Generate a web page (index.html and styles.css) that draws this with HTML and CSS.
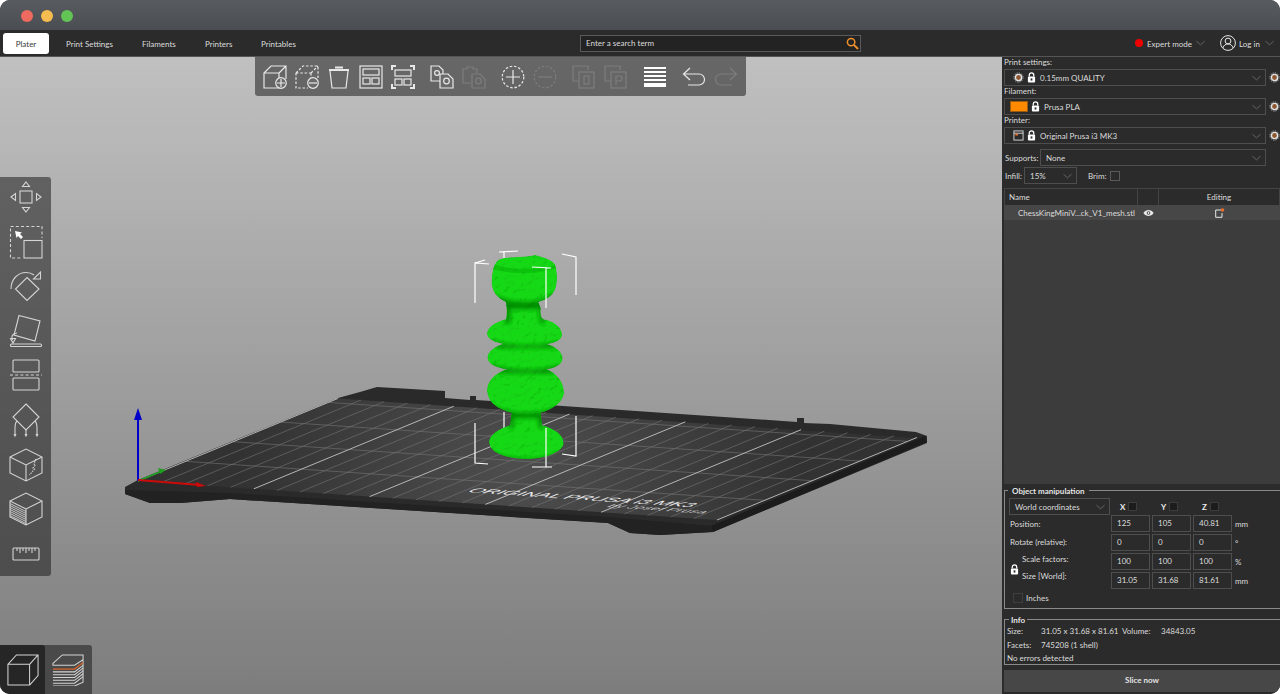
FILE: index.html
```html
<!DOCTYPE html>
<html lang="en">
<head>
<meta charset="utf-8">
<title>PrusaSlicer</title>
<link rel="stylesheet" href="styles.css">
</head>
<body>
<svg class="defs" aria-hidden="true">
  <defs>
    <symbol id="gear" viewBox="0 0 12 12"><circle cx="6" cy="6" r="3.4" fill="#8c5630" stroke="#e4e4e4" stroke-width="1.6"/><circle cx="6" cy="6" r="5" fill="none" stroke="#bdbdbd" stroke-width="1" stroke-dasharray="1.4 1.2"/></symbol>
    <symbol id="lock" viewBox="0 0 10 12"><path d="M2.5 5V3.4a2.5 2.5 0 0 1 5 0V5" fill="none" stroke="#fff" stroke-width="1.4"/><rect x="1" y="5" width="8" height="6.5" rx="1" fill="#fff"/><rect x="4" y="7" width="2" height="2.4" fill="#2b2b2b"/></symbol>
    <symbol id="chev" viewBox="0 0 10 6"><path d="M.5 1 5 5 9.500 1" fill="none" stroke="#6b6b6b" stroke-width="1"/></symbol>
    <radialGradient id="plate" gradientUnits="userSpaceOnUse" cx="520" cy="465" r="280"><stop offset="0" stop-color="#4e4e4e"/><stop offset="1" stop-color="#323232"/></radialGradient>
    <path id="piece" d="M175 60C190 48 240 55 285 45 310 50 340 62 346 75 353 100 352 130 346 148 335 172 312 182 295 186L302 205C300 222 303 232 310 238 340 242 366 262 366 284 366 302 342 309 320 312 345 318 368 335 368 356 366 376 342 384 320 388 350 400 373 425 372 462 366 492 330 512 302 518L306 556C345 566 372 585 371 612 364 642 300 660 250 657 200 654 150 642 147 606 148 585 175 566 210 556L215 518C180 510 143 492 141 450 143 418 170 398 200 388 170 384 143 374 142 352 144 332 168 318 190 312 168 308 141 300 141 280 143 260 172 243 198 238 201 225 201 205 198 186 175 176 157 160 155 130 155 100 160 72 175 60Z"/>
    <clipPath id="piece-clip"><use href="#piece"/></clipPath>
    <filter id="soft" x="-20%" y="-20%" width="140%" height="140%"><feGaussianBlur stdDeviation="7"/></filter>
    <filter id="bumpy" x="-2%" y="-2%" width="104%" height="104%"><feTurbulence type="fractalNoise" baseFrequency=".06" numOctaves="2" seed="7" result="n"/><feDiffuseLighting in="n" surfaceScale="3" diffuseConstant="1.150" lighting-color="#fff" result="l"><feDistantLight azimuth="235" elevation="62"/></feDiffuseLighting><feComposite in="SourceGraphic" in2="l" operator="arithmetic" k1="1.100" k2="0" k3="0" k4="0" result="c"/><feComposite in="c" in2="SourceAlpha" operator="in"/></filter>
  </defs>
</svg>
<div class="window">
  <header class="titlebar">
    <span class="dot dot-red"></span><span class="dot dot-yellow"></span><span class="dot dot-green"></span>
  </header>
  <nav class="tabs">
    <a class="tab tab-active">Plater</a>
    <a class="tab tab-print">Print Settings</a>
    <a class="tab tab-fil">Filaments</a>
    <a class="tab tab-prn">Printers</a>
    <a class="tab tab-ptb">Printables</a>
    <div class="search">
      <span>Enter a search term</span>
      <svg class="search-icon" viewBox="0 0 14 14"><circle cx="5.500" cy="5.500" r="4" fill="none" stroke="#f0902c" stroke-width="1.600"/><path d="M8.500 8.500 13 13" stroke="#f0902c" stroke-width="2.200"/></svg>
    </div>
    <div class="mode">
      <span class="red-dot"></span><span class="mode-label">Expert mode</span>
      <svg class="chev chev-mode"><use href="#chev"/></svg>
      <svg class="user" viewBox="0 0 16 16"><circle cx="8" cy="8" r="7.400" fill="none" stroke="#e8e8e8"/><circle cx="8" cy="6" r="2.900" fill="none" stroke="#e8e8e8"/><path d="M2.800 13c1-3 3-4 5.200-4s4.200 1 5.200 4" fill="none" stroke="#e8e8e8"/></svg>
      <span class="login">Log in</span>
      <svg class="chev"><use href="#chev"/></svg>
    </div>
  </nav>
  <main class="main">
    <section class="canvas">
      <svg class="scene" viewBox="0 57 1002 637">
        <path fill="#2a2a2a" d="M125 487 138 480 338 398 360 392 377 387 445 391V398L470 400V396h6V400L797 422V418h7V423L830 424 916 432 927 436V443L713 532 660 535 630 533 608 523 230 499 180 503 150 503 125 494Z"/>
        <path fill="#1c1c1c" d="M927 442 713 532 711 526 925 436Z"/>
        <path fill="#222" d="M125 490 230 493 608 517 712 526V532L660 535 630 533 608 523 230 499 180 503 150 503 125 494Z"/>
        <path fill="url(#plate)" d="M138 481 338 398.500 913 438 717 520Z"/>
        <g transform="matrix(2.316 .156 .952 -.393 138 481)" fill="none">
          <path vector-effect="non-scaling-stroke" stroke="#757575" stroke-width=".6" d="M10 0V210M20 0V210M30 0V210M40 0V210M60 0V210M70 0V210M80 0V210M90 0V210M110 0V210M120 0V210M130 0V210M140 0V210M160 0V210M170 0V210M180 0V210M190 0V210M210 0V210M220 0V210M230 0V210M240 0V210M0 50H250M0 100H250M0 150H250M0 200H250"/>
          <path vector-effect="non-scaling-stroke" stroke="#c4c4c4" stroke-width=".9" d="M50 0V210M100 0V210M150 0V210M200 0V210M0 0V210M250 0V210"/>
        </g>
        <text class="bed-title" transform="matrix(2.316 .156 -.952 .393 466 492)" textLength="97" lengthAdjust="spacingAndGlyphs">ORIGINAL PRUSA i3 MK3</text>
        <text class="bed-sub" transform="matrix(2.316 .156 -.952 .393 606 507)" textLength="42" lengthAdjust="spacingAndGlyphs">by Josef Prusa</text>
        <path stroke="#0000c8" stroke-width="2" d="M138 481V418"/><path fill="#0000c8" d="M138 408 134 420H142Z"/>
        <path stroke="#1f9f1f" stroke-width="1.600" d="M138 481 162 471"/><path fill="#1f9f1f" d="M166 470 158 468 160 474Z"/>
        <path stroke="#cc0a0a" stroke-width="1.800" d="M138 480 200 485"/><path fill="#cc0a0a" d="M206 486 196 482 197 487Z"/>
        <g fill="none" stroke="#fff" stroke-width="1.200"><path d="M504 412V431M504 260V252M499 252 518 251"/><path d="M562 254 576 257V295M576 416V456L562 454"/></g>
        <g transform="translate(440 240) scale(.33333)">
          <g filter="url(#bumpy)">
            <use href="#piece" fill="#12d012"/>
            <g clip-path="url(#piece-clip)">
              <g filter="url(#soft)" fill="#068806">
                <path d="M160 160C200 195 310 195 345 155L330 208H190Z"/>
                <path d="M145 298C190 322 330 322 365 298L340 324H175Z"/>
                <path d="M145 370C190 396 330 396 365 370L340 400H175Z"/>
                <path d="M145 485C190 530 330 530 368 485L330 535H180Z"/>
                <path d="M145 628C190 665 320 670 372 626L330 672H170Z"/>
                <path d="M196 190 210 190 212 250H196ZM298 190 312 190 312 250H300ZM212 525 224 525 220 565H206ZM292 525 306 525 310 565H298Z"/>
              </g>
              <path fill="#10bc10" d="M160 72C200 90 305 92 345 74L345 84C300 104 205 104 158 86Z"/>
            </g>
          </g>
        </g>
        <g fill="none" stroke="#fff" stroke-width="1.200"><path d="M489 264 475 263V303M485 260 475 263"/><path d="M532 267 551 268M546 268V308"/><path d="M475 423V463L488 464"/><path d="M546 428V467M532 467 552 467"/></g>
      </svg>

      <div class="top-toolbar">
        <div class="tool-group">
          <svg class="ti" viewBox="0 0 24 24"><path d="M1 8h15v15H1zM1 8l7-7h15v13M16 8l7-7"/><circle class="knock" cx="18" cy="18" r="5.300"/><path d="M18 14v8M14 18h8"/></svg>
          <svg class="ti" viewBox="0 0 24 24"><path class="dash" d="M1 8h15M1 8v15h12M1 8l7-7h15v12M16 8v5M16 8l7-7"/><circle class="knock" cx="18" cy="18" r="5.300"/><path d="M14 18h8"/></svg>
          <svg class="ti" viewBox="0 0 24 24"><path d="M3 6l2 17h14l2-17"/><path class="thick" d="M2 5h20M8 2.500h8"/></svg>
          <svg class="ti" viewBox="0 0 24 24"><rect x="1" y="1" width="22" height="22"/><rect x="4" y="4" width="16" height="6"/><rect x="4" y="13" width="7" height="6"/><rect x="13" y="13" width="7" height="6"/></svg>
          <svg class="ti" viewBox="0 0 24 24"><path class="thick" d="M1 5V1h4M19 1h4v4M23 19v4h-4M5 23H1v-4"/><rect x="4" y="5" width="16" height="6"/><rect x="4" y="14" width="7" height="6"/><rect x="13" y="14" width="7" height="6"/></svg>
        </div>
        <div class="tool-group">
          <svg class="ti" viewBox="0 0 24 24"><path d="M10 16H1V1h8l4 4v4"/><circle cx="7" cy="8" r="2.400"/><path class="knock" d="M10 9h8l5 5v9H10z"/><circle cx="16.500" cy="16" r="2.800"/></svg>
          <svg class="ti ti-off" viewBox="0 0 24 24"><path d="M9 18H1V4h4V2h6v2h4v4"/><path d="M10 9h8l5 5v9H10z"/><circle cx="16.500" cy="16" r="2.800"/></svg>
        </div>
        <div class="tool-group">
          <svg class="ti" viewBox="0 0 24 24"><circle class="dash" cx="12" cy="12" r="10.800"/><path d="M12 5v14M5 12h14"/></svg>
          <svg class="ti ti-off" viewBox="0 0 24 24"><circle class="dash" cx="12" cy="12" r="10.800"/><path d="M5 12h14"/></svg>
        </div>
        <div class="tool-group">
          <svg class="ti ti-off" viewBox="0 0 24 24"><path d="M16 5V1H1v15h6"/><rect x="7" y="7" width="15" height="16"/><rect x="12" y="11" width="5" height="8"/></svg>
          <svg class="ti ti-off" viewBox="0 0 24 24"><path d="M16 5V1H1v15h6"/><rect x="7" y="7" width="15" height="16"/><path d="M12 20v-9h3.500a2.500 2.500 0 0 1 0 5H12"/></svg>
        </div>
        <div class="tool-group">
          <svg class="ti ti-solid" viewBox="0 0 24 24"><path d="M1 2h22v2H1zM1 6h22v2H1zM1 10h22v2H1zM1 14h22v2H1zM1 18h22v4H1z"/></svg>
        </div>
        <div class="tool-group">
          <svg class="ti" viewBox="0 0 24 24"><path d="M8 3 1.500 9 8 15M1.500 9H17a5.500 5.500 0 0 1 0 11H6"/></svg>
          <svg class="ti ti-off" viewBox="0 0 24 24"><path d="M16 3l6.500 6-6.500 6M22.500 9H7a5.500 5.500 0 0 0 0 11h11"/></svg>
        </div>
      </div>

      <div class="left-toolbar">
        <svg class="li" viewBox="0 0 34 34"><rect x="11" y="11" width="12" height="12"/><path d="M17 2l3.500 4.500h-7zM17 32l3.500-4.500h-7zM2 17l4.500-3.500v7zM32 17l-4.500-3.500v7z"/></svg>
        <svg class="li" viewBox="0 0 34 34"><path class="dash" d="M1.500 17V1.500H33V13M1.500 19V33H12"/><rect x="15" y="15.500" width="18" height="17.500"/><path class="white" d="M6 6l7 1.500-2 1.500 3 3-2 2-3-3-1.500 2z"/></svg>
        <svg class="li" viewBox="0 0 34 34"><path d="M2 20C2 10 9 3.500 17 3.500c3 0 6 1 8 2.500"/><path d="M31.500 3 31.500 10H24.500z"/><path d="M18 8.500 30 20 18 31.500 6.500 20z"/></svg>
        <svg class="li" viewBox="0 0 34 34"><path d="M11 1.500 32 7 27 27 6 21z" transform="translate(-1 0)"/><path d="M8 19C3 20 2 22 3.500 26"/><path d="M1.500 24.500h5L4 29z"/><rect x="1.500" y="30" width="31" height="2.500" rx="1"/></svg>
        <svg class="li" viewBox="0 0 34 34"><rect x="4" y="2" width="26" height="12" rx="1"/><path class="dash" d="M1 17h32"/><rect x="4" y="20" width="26" height="12" rx="1"/></svg>
        <svg class="li" viewBox="0 0 34 34"><path d="M17 1 30 14 17 27 4 14z"/><path d="M8 18c-2 2-2 5-2 7v7M26 18c2 2 2 5 2 7v7M17 27v7M5 31l1 2 1-2M27 31l1 2 1-2M16 31l1 2 1-2"/></svg>
        <svg class="li" viewBox="0 0 34 34"><path d="M1 9 17 1 33 9V25L17 33 1 25zM1 9 17 17 33 9M17 17V33"/><path class="dash-fine" d="M27 11l-2 5 1.500 1-2.500 3 1.500 1-5 6"/></svg>
        <svg class="li" viewBox="0 0 34 34"><path d="M1 9 17 1 33 9V25L17 33 1 25zM1 9 17 17 33 9M17 17V33"/><path class="hatch" d="M1 11.500 17 19.500M1 13.500 17 21.500M1 15.500 17 23.500M1 17.500 17 25.500M1 19.500 17 27.500M1 21.500 17 29.500M1 23.500 17 31.500"/></svg>
        <svg class="li" viewBox="0 0 34 34"><rect x="4" y="11" width="26" height="12" rx="1"/><path d="M8 11v3M11 11v5M14 11v3M17 11v5M20 11v3M23 11v5M26 11v3"/></svg>
      </div>

      <div class="view-switch">
        <div class="view-btn view-btn-on">
          <svg class="vi" viewBox="0 0 34 34"><path d="M1 11h23v22H1zM1 11 10 1h23v22l-9 10M24 11 33 1"/></svg>
        </div>
        <div class="view-btn">
          <svg class="vi" viewBox="0 0 34 34"><path d="M1 10 11 1H33V6L24 12H1zM33 6V30L24 34H1"/><path d="M1 19H24L33 12M1 22H24L33 15M1 25H24L33 18M1 28H24L33 21M1 31H24L33 24"/><path class="orange" d="M1 16H24L33 9"/></svg>
        </div>
      </div>
    </section>

    <aside class="sidebar">
      <div class="settings">
        <div class="field-label">Print settings:</div>
        <div class="preset">
          <div class="combo">
            <svg class="picon gear-in"><use href="#gear"/></svg>
            <svg class="lockicon"><use href="#lock"/></svg>
            <span class="combo-text">0.15mm QUALITY</span>
            <svg class="chev"><use href="#chev"/></svg>
          </div>
          <svg class="picon"><use href="#gear"/></svg>
        </div>
        <div class="field-label">Filament:</div>
        <div class="preset">
          <div class="combo">
            <span class="swatch"></span>
            <svg class="lockicon"><use href="#lock"/></svg>
            <span class="combo-text">Prusa PLA</span>
            <svg class="chev"><use href="#chev"/></svg>
          </div>
          <svg class="picon"><use href="#gear"/></svg>
        </div>
        <div class="field-label">Printer:</div>
        <div class="preset">
          <div class="combo">
            <svg class="picon gear-in" viewBox="0 0 12 12"><rect x="1" y="1" width="10" height="10" fill="none" stroke="#ddd"/><path d="M1 3.500h10" stroke="#ddd"/><rect x="2.500" y="4" width="3" height="2" fill="#e8702a"/></svg>
            <svg class="lockicon"><use href="#lock"/></svg>
            <span class="combo-text">Original Prusa i3 MK3</span>
            <svg class="chev"><use href="#chev"/></svg>
          </div>
          <svg class="picon"><use href="#gear"/></svg>
        </div>
        <div class="support-row">
          <span class="support-label">Supports:</span>
          <div class="combo combo-support"><span>None</span><svg class="chev"><use href="#chev"/></svg></div>
        </div>
        <div class="infill-row">
          <span class="infill-label">Infill:</span>
          <div class="combo combo-infill"><span>15%</span><svg class="chev"><use href="#chev"/></svg></div>
          <span class="brim">Brim:</span>
          <span class="check"></span>
        </div>
      </div>

      <div class="object-list">
        <div class="list-head">
          <div class="col-name">Name</div>
          <div class="col-eye"></div>
          <div class="col-edit">Editing</div>
        </div>
        <div class="list-row">
          <div class="col-name row-name">ChessKingMiniV...ck_V1_mesh.stl</div>
          <div class="col-eye"><svg class="eye" viewBox="0 0 12 8"><path d="M.5 4C2 1.500 4 .7 6 .7S10 1.500 11.500 4C10 6.500 8 7.300 6 7.300S2 6.500.5 4Z" fill="#e8e8e8"/><circle cx="6" cy="4" r="2" fill="#474747"/><circle cx="6" cy="4" r="1" fill="#e8e8e8"/></svg></div>
          <div class="col-edit"><svg class="edit" viewBox="0 0 10 10"><path d="M6 2H.7v7.300H7V5" fill="none" stroke="#e8e8e8"/><circle cx="7.500" cy="2" r="1.800" fill="#e8702a"/></svg></div>
        </div>
      </div>

      <section class="group group-manip">
        <h2 class="group-title">Object manipulation</h2>
        <div class="manip-grid manip-head">
          <div class="combo combo-world"><span>World coordinates</span><svg class="chev"><use href="#chev"/></svg></div>
          <div class="axis"><b>X</b><i class="axis-box"></i></div>
          <div class="axis"><b>Y</b><i class="axis-box"></i></div>
          <div class="axis"><b>Z</b><i class="axis-box"></i></div>
        </div>
        <div class="manip-grid">
          <div class="mlabel">Position:</div><div class="num">125</div><div class="num">105</div><div class="num">40.81</div><div class="unit">mm</div>
          <div class="mlabel mlabel-rot">Rotate (relative):</div><div class="num">0</div><div class="num">0</div><div class="num">0</div><div class="unit">°</div>
          <svg class="lockicon manip-lock"><use href="#lock"/></svg>
          <div class="mlabel mlabel-scale">Scale factors:</div>
          <div class="mlabel mlabel-size">Size [World]:</div>
          <div class="num">100</div><div class="num">100</div><div class="num">100</div><div class="unit">%</div>
          <div class="num">31.05</div><div class="num">31.68</div><div class="num">81.61</div><div class="unit">mm</div>
        </div>
        <div class="inches"><span class="check check-dim"></span><span>Inches</span></div>
      </section>

      <section class="group group-info">
        <h2 class="group-title group-title-info">Info</h2>
        <div class="info-row info-first"><span class="info-key">Size:</span><span class="info-val">31.05 x 31.68 x 81.61</span><span class="info-vol">Volume:</span><span>34843.05</span></div>
        <div class="info-row"><span class="info-key">Facets:</span><span>745208 (1 shell)</span></div>
        <div class="info-row">No errors detected</div>
      </section>

      <button class="slice">Slice now</button>
    </aside>
  </main>
</div>
</body>
</html>
```

FILE: styles.css
```css
* { box-sizing: border-box; }
html, body { margin: 0; height: 100%; background: #fff; overflow: hidden; }
body { font-family: Lato, "Open Sans", sans-serif; font-size: 8px; color: #dcdcdc; }
.defs { position: absolute; width: 0; height: 0; }

.window { width: 1280px; height: 694px; display: flex; flex-direction: column; overflow: hidden; border-radius: 10px; background: #2b2b2b; }

.titlebar { height: 30px; flex: none; display: flex; align-items: center; gap: 8px; padding: 1px 0 0 21px; background: linear-gradient(#585c60, #4a4d51); }
.dot { width: 12px; height: 12px; border-radius: 50%; }
.dot-red { background: #ee6a5f; }
.dot-yellow { background: #f5bd4f; }
.dot-green { background: #61c454; }

.tabs { height: 27px; flex: none; display: flex; align-items: center; background: #2b2b2b; padding-left: 3px; border-bottom: 1px solid #555; }
.tab { color: #dcdcdc; white-space: nowrap; flex: none; padding-top: 1px; }
.tab-active { width: 46px; height: 21px; display: flex; align-items: center; justify-content: center; background: #fff; color: #3a3a3a; border-radius: 3px; }
.tab-print { margin-left: 17px; width: 76px; }
.tab-fil { width: 63px; }
.tab-prn { width: 56px; }
.tab-ptb { width: 319px; }
.search { width: 281px; height: 17px; flex: none; display: flex; align-items: center; justify-content: space-between; padding: 0 1px 0 5px; border: 1px solid #5a5a5a; background: #232323; }
.search-icon { width: 13px; height: 13px; }
.mode { flex: 1; display: flex; align-items: center; padding-left: 274px; white-space: nowrap; }
.red-dot { width: 8px; height: 8px; border-radius: 50%; background: #f00000; margin-right: 4px; flex: none; }
.mode-label { width: 49px; flex: none; padding-top: 1px; }
.chev { width: 9px; height: 6px; flex: none; }
.chev-mode { margin: 0 15px 0 0; }
.user { width: 16px; height: 16px; margin-right: 3px; flex: none; }
.login { width: 26px; flex: none; padding-top: 1px; }

.main { flex: 1; display: flex; min-height: 0; }
.canvas { position: relative; width: 1002px; flex: none; overflow: hidden; background: linear-gradient(#c0c0c0, #7d7d7d); }
.scene { position: absolute; left: 0; top: 0; width: 1002px; height: 637px; }
.bed-title { font-family: "Liberation Sans", sans-serif; font-size: 14px; fill: #e8e8e8; }
.bed-sub { font-family: "Liberation Sans", sans-serif; font-size: 11px; fill: #c8c8c8; }

.top-toolbar { position: absolute; left: 255px; top: 0; width: 491px; height: 39px; display: flex; align-items: center; gap: 15px; padding-left: 8px; background: rgba(30, 30, 30, .55); border-radius: 0 0 3px 3px; }
.tool-group { display: flex; gap: 8px; }
.ti { width: 24px; height: 24px; fill: none; stroke: #e8e8e8; stroke-width: 1.200; flex: none; }
.ti .knock { fill: #6a6a6a; }
.ti .dash { stroke-dasharray: 2.500 1.800; }
.ti .thick { stroke-width: 2; }
.ti-off { stroke: #7d7d7d; }
.ti-solid { fill: #fff; stroke: none; }

.left-toolbar { position: absolute; left: 0; top: 120px; width: 51px; height: 399px; display: flex; flex-direction: column; align-items: center; gap: 10.600px; padding-top: 3px; background: rgba(30, 30, 30, .55); border-radius: 0 3px 3px 0; }
.li { width: 34px; height: 34px; flex: none; fill: none; stroke: #d4d4d4; stroke-width: 1.100; overflow: visible; }
.li .dash { stroke-dasharray: 3 2.200; }
.li .dash-fine { stroke-dasharray: 1.500 1; }
.li .hatch { stroke-width: .9; }
.li .white { fill: #fff; stroke: none; }

.view-switch { position: absolute; left: 0; bottom: 0; width: 92px; height: 49px; display: flex; background: rgba(30, 30, 30, .55); border-radius: 0 3px 0 0; }
.view-btn { width: 46px; display: flex; align-items: center; justify-content: center; }
.view-btn-on { width: 45px; background: #262626; border-radius: 0 3px 0 0; }
.vi { width: 32px; height: 32px; fill: none; stroke: #d4d4d4; stroke-width: 1.100; }
.vi .orange { stroke: #d8642a; stroke-width: 1.400; }

.sidebar { width: 278px; flex: none; display: flex; flex-direction: column; padding: 0 0 2px 2px; background: #2b2b2b; }
.settings { flex: none; }
.field-label { height: 12px; line-height: 11px; }
.preset { display: flex; align-items: center; gap: 3px; height: 17px; }
.picon { width: 11px; height: 11px; flex: none; }
.gear-in { margin-left: 3px; }
.combo { display: flex; align-items: center; gap: 3px; width: 262px; height: 17px; padding: 0 4px 0 5px; border: 1px solid #4e4e4e; background: #2b2b2b; color: #dcdcdc; flex: none; }
.combo .chev { margin-left: auto; }
.combo-text { margin-left: 1px; }
.lockicon { width: 9px; height: 11px; flex: none; }
.swatch { width: 18px; height: 11px; background: #ff8a00; border: 1px solid #9a5a10; }
.support-row { display: flex; align-items: center; height: 17px; margin-top: 5px; padding-left: 1px; }
.support-label { width: 35px; flex: none; }
.combo-support { width: 226px; }
.infill-row { display: flex; align-items: center; height: 17px; margin-top: 1px; padding-left: 1px; }
.infill-label { width: 19px; flex: none; }
.combo-infill { width: 53px; }
.brim { margin-left: 11px; }
.check { width: 10px; height: 10px; border: 1px solid #5a5a5a; margin-left: 3px; flex: none; }
.check-dim { border-color: #3f3f3f; margin: 0; }

.object-list { flex: 1; margin-top: 4px; display: flex; flex-direction: column; background: #3c3c3c; }
.list-head { display: flex; height: 17px; background: #2b2b2b; border: 1px solid #444; border-bottom: 0; }
.list-row { display: flex; height: 15px; background: #474747; padding-left: 1px; }
.col-name { width: 133px; flex: none; display: flex; align-items: center; padding-left: 4px; }
.col-eye { width: 21px; flex: none; display: flex; align-items: center; justify-content: center; }
.col-edit { flex: 1; display: flex; align-items: center; justify-content: center; }
.list-head .col-name, .list-head .col-eye { border-right: 1px solid #444; }
.row-name { padding-left: 13px; white-space: nowrap; }
.eye { width: 11px; height: 8px; }
.edit { width: 10px; height: 10px; }

.group { position: relative; flex: none; border: 1px solid #8a8a8a; border-right: 0; }
.group-title { position: absolute; margin: 0; background: #2b2b2b; font-size: 8px; font-weight: 700; color: #e4e4e4; line-height: 11px; }
.group-manip { margin-top: 6px; padding: 7px 0 5px 4px; }
.group-manip .group-title { left: 3px; top: -5px; padding: 0 4px; }
.group-info { margin-top: 10px; height: 46px; padding: 4px 0 0 2px; }
.group-title-info { left: 4px; top: -5px; padding: 0 2px; }

.manip-grid { display: grid; grid-template-columns: 100px 39px 39px 39px 40px; column-gap: 2px; row-gap: 2px; grid-auto-rows: 17px; align-items: center; }
.combo-world { width: 101px; }
.axis { display: flex; align-items: center; gap: 3px; padding-left: 9px; }
.axis b { color: #eee; }
.axis-box { width: 9px; height: 9px; background: #1c1c1c; border: 1px solid #3c3c3c; display: block; }
.mlabel { padding-left: 1px; }
.mlabel-rot { padding-bottom: 2px; }
.manip-lock { grid-column: 1; grid-row: 3 / 5; justify-self: start; margin: 0 0 4px 1px; }
.mlabel-scale { grid-column: 1; grid-row: 3; padding: 0 0 6px 13px; }
.mlabel-size { grid-column: 1; grid-row: 4; padding: 0 0 9px 13px; }
.num { height: 17px; line-height: 15px; padding-left: 5px; border: 1px solid #4e4e4e; }
.unit { padding-left: 1px; }
.inches { display: flex; align-items: center; gap: 3px; height: 10px; margin-top: 4px; padding-left: 4px; }

.info-row { display: flex; height: 13px; align-items: center; white-space: nowrap; }
.info-first { margin-bottom: 1px; }
.info-key { width: 34px; flex: none; }
.info-val { width: 81px; flex: none; }
.info-vol { width: 39px; flex: none; }

.slice { flex: none; margin: 5px 0 0; height: 22px; padding: 0 0 2px; border: 0; background: #474747; color: #e4e4e4; font: 700 8px Lato, "Open Sans", sans-serif; }
```
